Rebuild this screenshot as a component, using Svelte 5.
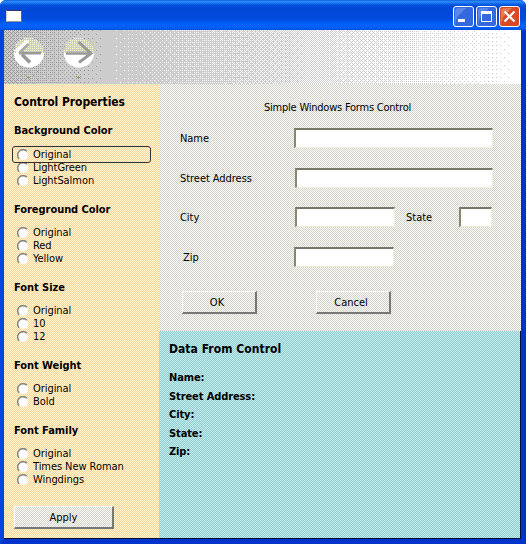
<script>
  const groups = [
    { title: 'Background Color', options: ['Original', 'LightGreen', 'LightSalmon'] },
    { title: 'Foreground Color', options: ['Original', 'Red', 'Yellow'] },
    { title: 'Font Size', options: ['Original', '10', '12'] },
    { title: 'Font Weight', options: ['Original', 'Bold'] },
    { title: 'Font Family', options: ['Original', 'Times New Roman', 'Wingdings'] }
  ];
  const data = ['Name:', 'Street Address:', 'City:', 'State:', 'Zip:'];

  // Ordered dither: each cell of an 8x8 matrix switches on at its own threshold.
  const rank = (x, y) => {
    let v = 0;
    for (let b = 0; b < 3; b++) {
      const xb = (x >> b) & 1;
      const yb = (y >> b) & 1;
      v = v * 4 + ((xb ^ yb) * 2 + yb);
    }
    return v;
  };
  const cells = Array.from({ length: 64 }, (_, i) => {
    const x = i % 8;
    const y = Math.floor(i / 8);
    return { id: i, x, y, r: rank(x, y) };
  });
</script>

<div class="window">
  <header>
    <div class="appicon"></div>
    <div class="caption">
      <svg class="cb" width="21" height="21" viewBox="0 0 21 21">
        <rect x=".5" y=".5" width="20" height="20" rx="2.5" fill="#3468df" stroke="#fff" />
        <path d="M2 19V4l2-2h9L4 11z" fill="#6e96ef" opacity=".65" />
        <rect x="5" y="13" width="7" height="3" fill="#fff" />
      </svg>
      <svg class="cb" width="21" height="21" viewBox="0 0 21 21">
        <rect x=".5" y=".5" width="20" height="20" rx="2.5" fill="#3468df" stroke="#fff" />
        <path d="M2 19V4l2-2h9L4 11z" fill="#6e96ef" opacity=".65" />
        <path d="M5.500 6v9.500h10V6" fill="none" stroke="#fff" />
        <rect x="5" y="5" width="11" height="3" fill="#fff" />
      </svg>
      <svg class="cb" width="21" height="21" viewBox="0 0 21 21">
        <rect x=".5" y=".5" width="20" height="20" rx="2.5" fill="#d94a22" stroke="#fff" />
        <path d="M2 19V4l2-2h9L4 11z" fill="#f09a78" opacity=".6" />
        <path d="M5.500 5.500l10 10M15.500 5.500l-10 10" stroke="#fff" stroke-width="2.200" />
      </svg>
    </div>
  </header>

  <div class="client">
    <div class="toolbar">
      <svg width="517" height="54" viewBox="0 0 517 54" shape-rendering="crispEdges">
        <defs>
          {#each cells as c (c.id)}
            <pattern id="w{c.id}" width="8" height="8" patternUnits="userSpaceOnUse">
              <rect x={c.x} y={c.y} width="1" height="1" fill="#fff" />
            </pattern>
            <pattern id="d{c.id}" width="8" height="8" patternUnits="userSpaceOnUse">
              <rect x={c.x} y={c.y} width="1" height="1" fill="#999" />
            </pattern>
          {/each}
          <pattern id="speck" width="4" height="4" patternUnits="userSpaceOnUse">
            <path d="M0 0h1v1H0zM2 2h1v1H2z" fill="#ffff99" />
            <path d="M2 0h1v1H2zM0 2h1v1H0z" fill="#fff" />
          </pattern>
        </defs>
        <rect width="517" height="54" fill="#ccc" />
        {#each cells as c (c.id)}
          <rect x={107 + c.r * 6.4} y="0" width={410 - c.r * 6.4} height="54" fill="url(#w{c.id})" />
          {#if c.r < 24}
            <rect x="0" y="0" width={98 - c.r * 4} height="54" fill="url(#d{c.id})" />
          {/if}
        {/each}
        <g>
          <circle cx="25" cy="22.500" r="15" fill="#ccc" />
          <circle cx="25" cy="22.500" r="15" fill="url(#speck)" />
          <circle cx="75" cy="22.500" r="15" fill="#ccc" />
          <circle cx="75" cy="22.500" r="15" fill="url(#speck)" />
        </g>
        <g shape-rendering="auto">
          <path d="M10 23h30c0 8-6 14.500-15 14.500S10 31 10 23zM60 23h30c0 8-6 14.500-15 14.500S60 31 60 23z" fill="#fff" />
          <path d="M12 22L24 11" stroke="#fff" stroke-width="4" />
          <path d="M18 24.500L26 32.500" stroke="#999" stroke-width="3.500" />
          <path d="M37 23H15" stroke="#999" stroke-width="3" />
          <path d="M15 23L24.500 14" stroke="#aaa" stroke-width="2.500" />
          <path d="M20 21.300h17" stroke="#ccc" />
          <path d="M62 23.500h24" stroke="#999" stroke-width="2.500" />
          <path d="M74.500 12l12.500 11.500-12 9" fill="none" stroke="#999" stroke-width="3" />
          <path d="M63 21.300h18" stroke="#bbb" />
        </g>
        <path d="M22 46h1v1h-1zM24 46h1v1h-1zM26 46h1v1h-1zM23 47h3v1h-3zM24 48h1v1h-1zM72 46h1v1h-1zM74 46h1v1h-1zM76 46h1v1h-1zM73 47h3v1h-3zM74 48h1v1h-1z" fill="#999966" />
      </svg>
    </div>

    <div class="main">
      <aside>
        <h1>Control Properties</h1>
        {#each groups as g, gi}
          <section class:first={gi === 0}>
            <h2>{g.title}</h2>
            {#each g.options as o, oi}
              <label class:focused={gi === 0 && oi === 0}>
                <svg width="12" height="12" viewBox="0 0 12 12">
                  <circle cx="6" cy="6" r="5" fill="#fff" />
                  <path d="M2.200 9.800A5.200 5.200 0 0 1 9.800 2.200" fill="none" stroke="#858585" stroke-width="1.500" />
                </svg>
                <span>{o}</span>
              </label>
            {/each}
          </section>
        {/each}
        <button class="apply">Apply</button>
      </aside>

      <div class="right">
        <form onsubmit={(e) => e.preventDefault()}>
          <div class="formtitle">Simple Windows Forms Control</div>
          <div class="row r1"><span class="lab">Name</span><input class="long" aria-label="Name" /></div>
          <div class="row r2"><span class="lab sa">Street Address</span><input class="street" aria-label="Street Address" /></div>
          <div class="row r3">
            <span class="lab">City</span><input class="short" aria-label="City" />
            <span class="statelab">State</span><input class="state" aria-label="State" />
          </div>
          <div class="row r4"><span class="lab zip">Zip</span><input class="short" aria-label="Zip" /></div>
          <div class="buttons"><button>OK</button><button>Cancel</button></div>
        </form>
        <div class="data">
          <h1>Data From Control</h1>
          {#each data as d}
            <div class="d">{d}</div>
          {/each}
        </div>
      </div>
    </div>
  </div>
</div>

<style>
  :global(body) { margin: 0; background: #fff; }
  .window {
    width: 526px; height: 544px; box-sizing: border-box; overflow: hidden;
    display: flex; flex-direction: column;
    border-radius: 6px 6px 0 0;
    background: #0040dd;
    font-family: "DejaVu Sans Condensed", "DejaVu Sans", sans-serif;
    font-stretch: condensed;
    font-size: 11px; color: #000;
  }
  header {
    height: 30px; flex: none; box-sizing: border-box;
    display: flex; align-items: flex-start; justify-content: space-between;
    padding: 6px 6px 0 6px;
    background:
      linear-gradient(transparent 5px, rgba(0, 51, 204, .3) 8px 18px, transparent 23px),
      repeating-conic-gradient(rgba(0, 40, 170, .2) 0 25%, transparent 0 50%) 0 0 / 2px 2px,
      linear-gradient(#0050d8 0, #3399ff 1px, #2080ff 3px, #0058e0 5px, #0058ea 18px, #0066ff 24px, #0066ff 28px, #0050d8 30px);
  }
  .appicon {
    width: 16px; height: 12px; margin-top: 4px; box-sizing: border-box;
    background: #fff; border: 1px solid #666; border-top-color: #336; border-left-color: #ccc; border-bottom-color: #999;
  }
  .caption { display: flex; gap: 2px; }
  .cb { display: block; }
  .client {
    flex: 1; display: flex; flex-direction: column; min-height: 0;
    border: solid #0044e0; border-width: 0 5px 5px 4px;
    border-right-color: #0033cc; border-bottom-color: #0033cc;
  }
  .toolbar { height: 54px; flex: none; }
  .toolbar svg { display: block; }
  .main { flex: 1; display: flex; min-height: 0; }
  aside {
    width: 155px; flex: none; box-sizing: border-box; padding: 11px 0 0 10px;
    display: flex; flex-direction: column;
    background: repeating-conic-gradient(#ffcfa0 0 25%, #ffffd0 0 50%) 0 0 / 2px 2px;
    border-bottom: 1px solid #001133;
  }
  h1 { margin: 0; font-size: 12px; line-height: 14px; font-weight: bold; white-space: nowrap; letter-spacing: -.06px; }
  h2 { margin: 0 0 10px; font-size: 11px; line-height: 13px; font-weight: bold; letter-spacing: -.05px; }
  section { margin-top: 16px; }
  section.first { margin-top: 15px; }
  section.first h2 { margin-bottom: 11px; }
  label { display: flex; align-items: center; height: 13px; padding-left: 3px; gap: 4px; line-height: 13px; white-space: nowrap; letter-spacing: -.06px; }
  label svg { flex: none; }
  .focused { outline: 1px solid #333; outline-offset: 1px; border-radius: 1px; margin: 0 10px 0 0; }
  button {
    width: 75px; height: 23px; box-sizing: border-box; padding: 0 4px 0 0;
    font: inherit; color: #000; border: solid; border-width: 1px 2px 2px 1px;
    border-color: #fff #777 #777 #fff;
    background: repeating-conic-gradient(#d0d0d0 0 25%, #fffff4 0 50%) 0 0 / 2px 2px;
  }
  .apply { width: 100px; margin-top: 20px; padding: 0; }
  .right { flex: 1; display: flex; flex-direction: column; }
  form {
    height: 247px; flex: none; box-sizing: border-box; padding: 17px 0 0 21px;
    background: repeating-conic-gradient(#d0d0d0 0 25%, #fffff4 0 50%) 0 0 / 2px 2px;
  }
  .formtitle { height: 13px; line-height: 13px; padding-left: 84px; white-space: nowrap; letter-spacing: -.22px; }
  .row { display: flex; align-items: center; height: 20px; }
  .r1 { margin-top: 14px; }
  .r2, .r4 { margin-top: 20px; }
  .r3 { margin-top: 19px; }
  .lab { width: 114px; white-space: nowrap; letter-spacing: -.05px; }
  .row.r2 .lab, .row.r3 .lab { width: 115px; }
  .zip { box-sizing: border-box; padding-left: 3px; }
  input {
    box-sizing: border-box; height: 20px; padding: 0 2px; border: solid; border-width: 2px 1px 1px 2px;
    border-color: #77776a #eeeedd #eeeedd #88886f; background: #fff; font: inherit; outline: none;
  }
  .long { width: 199px; }
  .street { width: 198px; }
  .short { width: 100px; }
  .state { width: 33px; }
  .statelab { width: 53px; margin-left: 11px; }
  .buttons { display: flex; gap: 59px; margin: 24px 0 0 2px; }
  .data {
    flex: 1; padding: 11px 0 0 10px; font-weight: bold;
    background: repeating-conic-gradient(#99cccc 0 25%, #bcecf0 0 50%) 0 0 / 2px 2px;
    border: solid #001133; border-width: 0 1px 1px 0;
  }
  .data h1 { margin-bottom: 12px; letter-spacing: .05px; }
  .d { height: 18.500px; line-height: 19.500px; letter-spacing: -.1px; }
</style>
